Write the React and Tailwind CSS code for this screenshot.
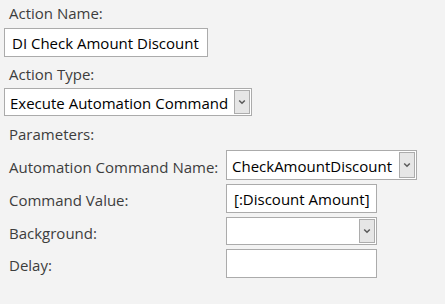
import React from "react";

function Chevron() {
  return (
    <svg width="8" height="6" viewBox="0 0 8 6" className="block">
      <path d="M1.2 1.5 L4 4.3 L6.8 1.5" fill="none" stroke="#5a5a5a" strokeWidth="1.5" />
    </svg>
  );
}

function Select({ value, width, height }) {
  return (
    <div
      className={`flex items-stretch border border-[#ababab] bg-white ${width} ${height} p-[1px]`}
    >
      <div className="flex-1 flex items-center pl-[4px] pt-[2px] text-black whitespace-nowrap overflow-hidden">
        {value}
      </div>
      <div className="w-[16px] flex items-center justify-center border border-[#acacac] bg-[#e6e6e6]">
        <Chevron />
      </div>
    </div>
  );
}

function TextBox({ value, width, height }) {
  return (
    <div
      className={`flex items-center border border-[#ababab] bg-white ${width} ${height} pl-[7px] pt-[2px] text-black whitespace-nowrap overflow-hidden`}
    >
      {value}
    </div>
  );
}

function Row({ label, children }) {
  return (
    <div className="flex items-center">
      <div className="w-[226px] pl-[9px] pt-[4px]">{label}</div>
      {children}
    </div>
  );
}

export default function App() {
  return (
    <div
      className="w-[445px] h-[304px] bg-[#f3f3f3] text-[#3d3d3d] text-[15px] overflow-hidden"
      style={{ fontFamily: '"Open Sans", "Liberation Sans", sans-serif' }}
    >
      <div className="flex flex-col pl-[4px]">
        <div className="h-[26px] pl-[5px] flex items-center">Action Name:</div>
        <div className="mt-[2px]">
          <TextBox value="DI Check Amount Discount" width="w-[204px]" height="h-[29px]" />
        </div>
        <div className="mt-[4px] h-[26px] pl-[5px] flex items-center">Action Type:</div>
        <div className="mt-[1px]">
          <Select value="Execute Automation Command" width="w-[248px]" height="h-[28px]" />
        </div>
        <div className="mt-[5px] h-[26px] pl-[5px] flex items-center">Parameters:</div>
      </div>
      <div className="flex flex-col gap-[4px] mt-[3px]">
        <Row label="Automation Command Name:">
          <Select value="CheckAmountDiscount" width="w-[191px]" height="h-[30px]" />
        </Row>
        <Row label="Command Value:">
          <TextBox value="[:Discount Amount]" width="w-[151px]" height="h-[29px]" />
        </Row>
        <Row label="Background:">
          <Select value="" width="w-[151px]" height="h-[28px]" />
        </Row>
        <Row label="Delay:">
          <TextBox value="" width="w-[151px]" height="h-[29px]" />
        </Row>
      </div>
    </div>
  );
}
